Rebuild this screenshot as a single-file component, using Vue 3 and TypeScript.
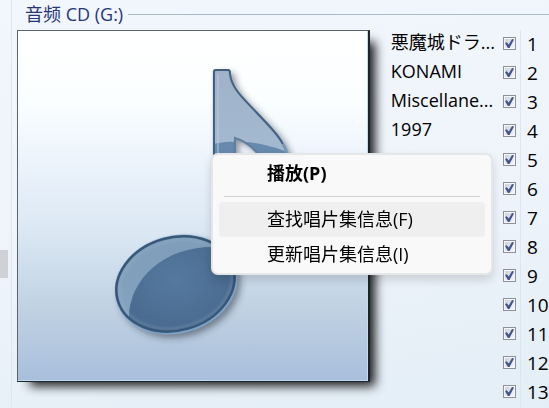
<script setup lang="ts">
import { reactive } from 'vue'

interface Track {
  number: number
  selected: boolean
}

const albumInfo: string[] = ['悪魔城ドラキュラ', 'KONAMI', 'Miscellaneous', '1997']
const shortInfo = (text: string): string => {
  const limit = /^[\x00-\x7f]*$/.test(text) ? 10 : 5
  return text.length > limit ? text.slice(0, limit) + '...' : text
}

const tracks = reactive<Track[]>(
  Array.from({ length: 13 }, (_, i) => ({ number: i + 1, selected: true })),
)
</script>

<template>
  <div class="page">
    <div class="gutter"><span class="handle"></span></div>
    <main class="disc">
      <header class="heading">
        <h1>音频 CD (G:)</h1>
        <span class="rule"></span>
      </header>
      <div class="content">
        <div class="cover">
          <svg class="note" viewBox="18 31 350 350" aria-hidden="true">
            <defs>
              <linearGradient id="stemFill" x1="0" y1="0" x2="0" y2="1">
                <stop offset="0" stop-color="#9fb2c8" />
                <stop offset="0.35" stop-color="#a3b9cf" />
                <stop offset="1" stop-color="#8ba9c7" />
              </linearGradient>
              <linearGradient id="headLight" x1="0" y1="0" x2="0" y2="1">
                <stop offset="0" stop-color="#7f9dba" />
                <stop offset="1" stop-color="#84a4bf" />
              </linearGradient>
              <radialGradient id="headDark" cx="0.4" cy="0.35" r="0.65">
                <stop offset="0" stop-color="#55799f" />
                <stop offset="1" stop-color="#48688c" />
              </radialGradient>
              <clipPath id="headClip">
                <ellipse cx="176" cy="284.500" rx="60" ry="46" transform="rotate(-16 176 284.500)" />
              </clipPath>
              <clipPath id="stemClip">
                <path d="M214 72 Q214 70 216 70 H228 Q230 70 230 73 C231 88 243 98 258 114 C274 131 287 141 290 170 H270 C262 154 250 144 235 138 V275 H214 Z" />
              </clipPath>
              <filter id="noteShadow" x="-20%" y="-20%" width="140%" height="140%">
                <feDropShadow dx="4" dy="4" stdDeviation="3" flood-color="#28323c" flood-opacity="0.5" />
              </filter>
              <filter id="soften"><feGaussianBlur stdDeviation="1.2" /></filter>
            </defs>
            <g filter="url(#noteShadow)">
              <path d="M213 72 Q213 69 216 69 H228 Q231 69 231 73 C232 87 244 98 259 113 C275 130 289 141 291 170 H270 C262 154 250 144 235 138 V275 H213 Z" fill="url(#stemFill)" />
              <ellipse cx="176" cy="284.500" rx="62" ry="48.500" transform="rotate(-16 176 284.500)" fill="#7ba7d0" />
            </g>
            <g clip-path="url(#stemClip)">
              <path d="M213 144 Q250 136 290 153 V180 H213 Z" fill="#6789ad" />
              <path d="M218 74 V156" stroke="#bdcddd" stroke-width="1" />
            </g>
            <path d="M214 170 V72 Q214 70 216 70 H228 Q230 70 230 73 C231 88 243 98 258 114 C270 127 278 134 283 144" fill="none" stroke="#405f80" stroke-width="2" />
            <path d="M283 144 Q288 151 290 170" fill="none" stroke="#7396b7" stroke-width="3" />
            <path d="M235 170 V138 C248 142 258 151 266 166" fill="none" stroke="#607e9f" stroke-width="2" />
            <g clip-path="url(#headClip)">
              <rect x="110" y="230" width="135" height="110" fill="url(#headLight)" />
              <path d="M129 322 C127 280 164 246 215 247 H245 V342 H129 Z" fill="url(#headDark)" />
              <ellipse cx="176" cy="284.500" rx="57" ry="43" transform="rotate(-16 176 284.500)" fill="none" stroke="#a2bacf" stroke-opacity="0.3" stroke-width="2" filter="url(#soften)" />
            </g>
            <ellipse cx="175.500" cy="284" rx="60" ry="46.500" transform="rotate(-16 175.500 284)" fill="none" stroke="#375677" stroke-width="2.500" />
          </svg>
        </div>
        <ul class="info">
          <li v-for="item in albumInfo" :key="item" :title="item">{{ shortInfo(item) }}</li>
        </ul>
        <div class="tracks">
          <label v-for="track in tracks" :key="track.number" class="track">
            <input v-model="track.selected" type="checkbox" />
            <span class="number">{{ track.number }}</span>
          </label>
        </div>
      </div>
    </main>
    <div class="menu" role="menu">
      <button class="item default" type="button" role="menuitem">播放(P)</button>
      <hr />
      <button class="item active" type="button" role="menuitem">查找唱片集信息(F)</button>
      <button class="item" type="button" role="menuitem">更新唱片集信息(I)</button>
    </div>
  </div>
</template>

<style>
body {
  margin: 0;
}
</style>

<style scoped>
.page {
  position: relative;
  display: flex;
  height: 100vh;
  overflow: hidden;
  background: linear-gradient(170deg, #f2f6fd 0%, #eff4fb 50%, #e3eef6 100%);
  color: #000;
  font-family: 'Open Sans', 'Noto Sans CJK SC', sans-serif;
  font-size: 18px;
}
.gutter {
  box-sizing: border-box;
  flex: 0 0 12px;
  padding-top: 250px;
  border-right: 1px solid #e0e6f0;
}
.handle {
  display: block;
  width: 8px;
  height: 28px;
  background: #cfd1d7;
}
.disc {
  flex: 1;
  min-width: 0;
}
.heading {
  display: flex;
  align-items: center;
  gap: 5px;
  height: 28px;
  margin-bottom: 2px;
  padding-left: 13px;
}
h1 {
  margin: 0;
  color: #26357c;
  font-size: 18px;
  font-weight: 400;
  line-height: 28px;
  white-space: nowrap;
}
.rule {
  flex: 1;
  height: 1px;
  background: #a9b9d8;
}
.content {
  display: flex;
  align-items: flex-start;
  padding-left: 5px;
}
.cover {
  box-sizing: border-box;
  flex: 1;
  border: 1px solid #5c646c;
  border-right: 2px solid #1c242c;
  border-bottom-color: #1c242c;
  background: linear-gradient(180deg, #fff 0%, #fbfeff 20%, #edf4fc 36%, #dae7f3 58%, #bfd1e2 80%, #a8bedb 100%);
  box-shadow: inset -1px -1px 0 #c2daf0, 9px 8px 10px -4px rgba(0, 0, 0, 0.9);
}
.note {
  display: block;
  width: 100%;
}
.info {
  flex: 0 0 104px;
  margin: 0 8px 0 21px;
  padding: 0;
  list-style: none;
  font-family: 'Open Sans', 'Noto Sans CJK JP', sans-serif;
  white-space: nowrap;
}
.info li {
  height: 29px;
  line-height: 24px;
}
.tracks {
  flex: 0 0 46px;
}
.track {
  display: flex;
  align-items: center;
  height: 29px;
}
.track input {
  box-sizing: border-box;
  flex: 0 0 13px;
  height: 13px;
  margin: 0 0 2px;
  appearance: none;
  border: 1px solid #8e9199;
  background: linear-gradient(135deg, #c9cfd9, #f8f9fc);
  box-shadow: inset 0 0 0 1px #f6f7fa;
}
.track input:checked::after {
  content: '';
  display: block;
  width: 9px;
  height: 9px;
  margin: 1px;
  background: #42558c;
  clip-path: polygon(0 45%, 20% 35%, 42% 62%, 78% 0, 100% 5%, 50% 100%, 32% 100%);
}
.number {
  margin-left: 4px;
  padding-left: 6px;
  border-left: 1px solid #dce5f2;
  font-size: 19px;
  line-height: 29px;
}
.menu {
  position: absolute;
  top: 153px;
  left: 211px;
  box-sizing: border-box;
  width: 282px;
  padding: 1px 6px;
  border: 2px solid #e4e6e8;
  border-radius: 7px;
  background: #f9f9f9;
  box-shadow: 0 5px 10px rgba(0, 0, 0, 0.14);
}
.item {
  display: block;
  width: 100%;
  height: 35px;
  padding: 0 0 0 48px;
  border: 0;
  border-radius: 4px;
  background: none;
  color: #000;
  font: inherit;
  line-height: 35px;
  text-align: left;
}
.item.default {
  font-weight: 700;
}
.item.active {
  background: #efefef;
}
hr {
  height: 1px;
  margin: 5px 5px;
  border: 0;
  background: #d2d2d2;
}
</style>
